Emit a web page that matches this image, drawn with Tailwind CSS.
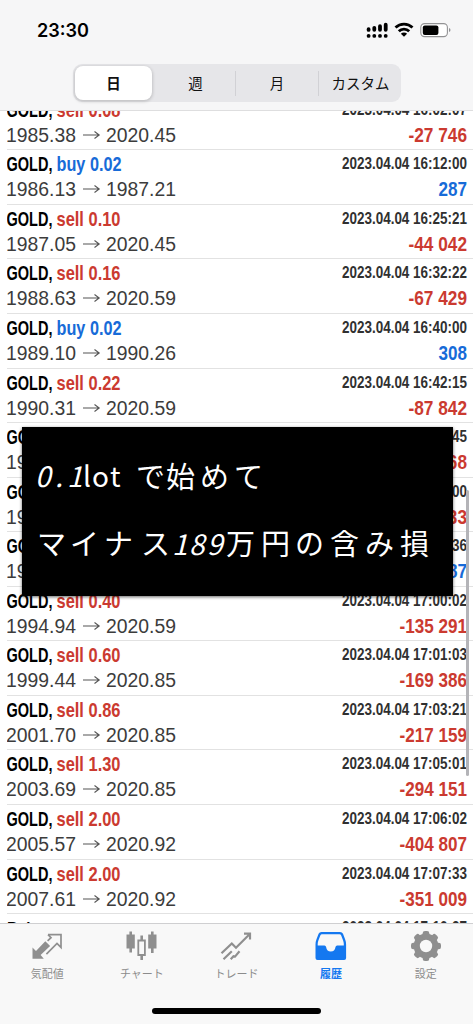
<!DOCTYPE html>
<html lang="ja">
<head>
<meta charset="utf-8">
<title>履歴</title>
<script src="https://cdn.jsdelivr.net/npm/@tailwindcss/browser@4"></script>
</head>
<body class="bg-white font-['Liberation_Sans','Noto_Sans_CJK_JP',sans-serif]">
<div class="relative flex h-[1024px] w-[473px] flex-col overflow-hidden bg-white">
  <header class="flex h-[111px] shrink-0 flex-col border-b border-[#dededf] bg-[#f6f6f7]">
    <div class="flex h-[64px] items-center justify-between pr-[22px] pl-[37px]">
      <svg class="mt-[-4px] h-[24px] w-[56px]" viewBox="0 0 56 24"><text x="0" y="19" textLength="52" lengthAdjust="spacingAndGlyphs" class="fill-black font-['Inter'] text-[19px] font-semibold">23:30</text></svg>
      <svg class="mt-[-4px] h-[20px] w-[86px]" viewBox="365 20 86 20">
        <g stroke="#000" stroke-width="3.8" stroke-linecap="round"><path d="M368.6 29.2v.7M374.3 27.8v2M380 26.2v3.6M385.7 24.7v5.1"/><path d="M368.6 35.8v.1M374.3 35.8v.1M380 35.8v.1M385.7 35.8v.1"/></g>
        <g fill="none" stroke="#000" stroke-width="2.8"><path d="M395.5 27.6a12.2 12.2 0 0 1 17 0M398.8 31.2a7.4 7.4 0 0 1 10.4 0"/></g><path d="M400.9 33.8a4.3 4.3 0 0 1 6.2 0L404 36.8z"/>
        <rect x="420.8" y="23.6" width="26.6" height="13" rx="3.8" fill="#fff" stroke="#929294" stroke-width="1.1"/><rect x="422.8" y="25.4" width="15.6" height="9.5" rx="2"/><path d="M449 28v4q1.5-.5 1.5-2t-1.5-2" fill="#929294"/>
      </svg>
    </div>
    <div class="ml-[73px] flex h-[38px] w-[328px] items-center rounded-[9px] bg-[#e6e6e9] px-[2px] text-[14.5px] text-[#111]">
      <div class="flex h-[34px] w-[77px] items-center justify-center rounded-[8px] bg-white pt-[3px] font-bold shadow-[0_1px_3px_1px_rgba(0,0,0,0.15)]">日</div>
      <div class="flex h-[25px] w-[84px] items-center justify-center border-r border-[#d1d1d5] pt-[3px] pl-[4px]">週</div>
      <div class="flex h-[25px] w-[83px] items-center justify-center border-r border-[#d1d1d5] pt-[3px]">月</div>
      <div class="flex h-[25px] flex-1 items-center justify-center pt-[3px] pl-[3px]">カスタム</div>
    </div>
  </header>
  <main class="relative h-[812px] shrink-0 overflow-hidden">
    <div id="rows" class="mt-[-15.3px]"></div>
    <div class="absolute top-[379px] left-[466px] h-[286px] w-[3px] rounded-full bg-[#b4b4b8]"></div>
  </main>
  <nav class="flex h-[101px] shrink-0 flex-col items-center border-t border-[#cfcfd1] bg-[#f8f8f8] text-[11px] text-[#8c8c8c]">
    <div class="grid h-[80px] w-full grid-cols-5">
      <div class="flex flex-col items-center pt-[6px]">
        <svg class="h-[32px] w-[36px]" viewBox="29 930 36 32"><path fill="#8f8f8f" d="M32.5 958.7V947.5L36 951l9.3-9.7 4.8 4.7-9.5 9 3.2 3.7z"/><path d="M48 934.7h13v12.7l-4-4-10.6 10.8M48 934.7l3 3-3.4 3.2" fill="none" stroke="#8f8f8f" stroke-width="1.7"/></svg>
        <span class="mt-[2px] leading-[20px]">気配値</span></div>
      <div class="flex flex-col items-center pt-[6px]">
        <svg class="h-[32px] w-[36px]" viewBox="124 930 36 32"><path d="M130.7 931.5v21M141.7 935.5v6m0 12v6.5M152.3 931.5v21.5" stroke="#8f8f8f" stroke-width="2.6"/><path fill="#8f8f8f" d="M126.5 934.5h8.3v14h-8.3zM148.2 934.5h8.3v14h-8.3z"/><path fill="#f8f8f8" stroke="#8f8f8f" stroke-width="1.8" d="M138.3 940.5h6.6v14.5h-6.6z"/></svg>
        <span class="mt-[2px] leading-[20px]">チャート</span></div>
      <div class="flex flex-col items-center pt-[6px]">
        <svg class="h-[32px] w-[36px]" viewBox="218 930 36 32"><g fill="none" stroke="#8f8f8f" stroke-width="2.2"><path d="m221.5 953.3 10.3-9.8 4.2 4.2L249.5 934.3M244 933.6h6v6M223.5 959.3l8.3-8M230.7 959.3l2.8-3 1.5.3 4.5-5.3"/></g></svg>
        <span class="mt-[2px] leading-[20px]">トレード</span></div>
      <div class="flex flex-col items-center pt-[6px] font-bold text-[#1478f0]">
        <svg class="h-[32px] w-[36px]" viewBox="313 930 36 32"><path fill="#1478f0" fill-rule="evenodd" d="M321.5 932h18.5q2.2 0 3 1.8l2.2 5.7q.9 2.3.9 5V958q0 2-2 2h-26.6q-2 0-2-2v-13.5q0-2.700.9-5l2.200-5.700q.8-1.800 2.900-1.800zm.5 2.300q-1.200 0-1.700 1.200l-2 5.300q-.6 1.700-.6 3.200v1.400h6.800q1.300 0 1.600 1.500.7 4.600 4.700 4.600t4.700-4.600q.3-1.500 1.600-1.500h6.700v-1.400q0-1.500-.6-3.200l-2-5.300q-.5-1.200-1.700-1.200z"/></svg>
        <span class="mt-[2px] leading-[20px]">履歴</span></div>
      <div class="flex flex-col items-center pt-[6px]">
        <svg class="h-[32px] w-[36px]" viewBox="-18 -16 36 32"><g fill="#8f8f8f"><circle r="12.4"/><g id="tooth"><rect x="-3.3" y="-15" width="6.6" height="30" rx="2.3"/><rect x="-3.3" y="-15" width="6.6" height="30" rx="2.3" transform="rotate(90)"/></g><use href="#tooth" transform="rotate(45)"/></g><circle r="6.2" fill="#f8f8f8"/></svg>
        <span class="mt-[2px] leading-[20px]">設定</span></div>
    </div>
    <div class="mt-[4px] h-[6px] w-[169px] rounded-full bg-black"></div>
  </nav>
  <div class="absolute top-[427px] left-[22px] h-[169px] w-[431px] bg-black shadow-[0_1px_3px_rgba(0,0,0,0.6)]">
    <svg class="h-full w-full fill-white font-['Noto_Sans_CJK_JP',sans-serif] text-[29px] font-normal" viewBox="22 427 431 169">
      <text x="35" y="487" class="text-[28px] italic">0</text>
      <text x="55 67" y="487" class="text-[28px] italic">.1</text>
      <text x="83 92 110" y="487" class="text-[28px]">lot</text>
      <text x="136 166 200 234" y="488">で始めて</text>
      <text x="37 70 104 141" y="555">マイナス</text>
      <text x="172 189 207" y="555" class="text-[28px] italic">189</text>
      <text x="226 261 295 330 365 400" y="555">万円の含み損</text>
    </svg>
  </div>
</div>
<script>
const trades = [
  ['sell 0.08','1985.38','2020.45','16:02:07','-27 746'],
  ['buy 0.02','1986.13','1987.21','16:12:00','287'],
  ['sell 0.10','1987.05','2020.45','16:25:21','-44 042'],
  ['sell 0.16','1988.63','2020.59','16:32:22','-67 429'],
  ['buy 0.02','1989.10','1990.26','16:40:00','308'],
  ['sell 0.22','1990.31','2020.59','16:42:15','-87 842'],
  ['sell 0.26','1991.42','2020.59','16:45:45','-75 868'],
  ['sell 0.30','1992.54','2020.59','16:50:00','-84 133'],
  ['buy 0.02','1993.12','1994.20','16:55:36','287'],
  ['sell 0.40','1994.94','2020.59','17:00:02','-135 291'],
  ['sell 0.60','1999.44','2020.85','17:01:03','-169 386'],
  ['sell 0.86','2001.70','2020.85','17:03:21','-217 159'],
  ['sell 1.30','2003.69','2020.85','17:05:01','-294 151'],
  ['sell 2.00','2005.57','2020.92','17:06:02','-404 807'],
  ['sell 2.00','2007.61','2020.92','17:07:33','-351 009'],
  ['Balance','','','17:10:27','']
];
document.getElementById('rows').innerHTML = trades.map(([type, open, close, time, profit]) => {
  const balance = type === 'Balance';
  const side = type.startsWith('buy') ? 'fill-[#176bd8]' : 'fill-[#cb3a30]';
  const gain = profit.startsWith('-') ? 'fill-[#cb3a30]' : 'fill-[#176bd8]';
  return `<div class="flex h-[54.57px] justify-between pl-[7px]">
    <svg class="h-[54.57px] w-[180px] shrink-0" viewBox="0 0 180 54.57">
      ${balance ? '<text x="0" y="20.9" textLength="58" lengthAdjust="spacingAndGlyphs" class="text-[19px] font-bold">Balance</text>' : `
      <text x="-.5" y="20.9" textLength="46" lengthAdjust="spacingAndGlyphs" class="fill-black text-[19.5px] font-bold">GOLD,</text>
      <text x="49.5" y="20.9" textLength="${type.startsWith('buy') ? 65 : 64}" lengthAdjust="spacingAndGlyphs" class="${side} text-[19.5px] font-bold">${type}</text>
      <text x="-1" y="46.5" textLength="70" lengthAdjust="spacingAndGlyphs" class="fill-[#3c3c3c] text-[19.5px]">${open}</text>
      <path d="M76 39h16M87.500 35.500l4.700 3.500-4.700 3.500" fill="none" stroke="#555" stroke-width="1.100"/>
      <text x="99" y="46.5" textLength="70" lengthAdjust="spacingAndGlyphs" class="fill-[#3c3c3c] text-[19.5px]">${close}</text>`}
    </svg>
    <svg class="h-[54.57px] flex-1" viewBox="0 0 286 54.57">
      <text x="155" y="19.5" textLength="125" lengthAdjust="spacingAndGlyphs" class="fill-[#303030] text-[16px] font-bold">2023.04.04 ${time}</text>
      <text x="280" y="46.5" text-anchor="end" textLength="${({3: 28.5, 7: 58.5, 8: 67.5})[profit.length] || 1}" lengthAdjust="spacingAndGlyphs" class="${gain} text-[19.5px] font-bold">${profit}</text>
    </svg>
  </div><div class="mt-[-1px] ml-[7px] h-px bg-[#e2e2e2]"></div>`;
}).join('');
</script>
</body>
</html>
